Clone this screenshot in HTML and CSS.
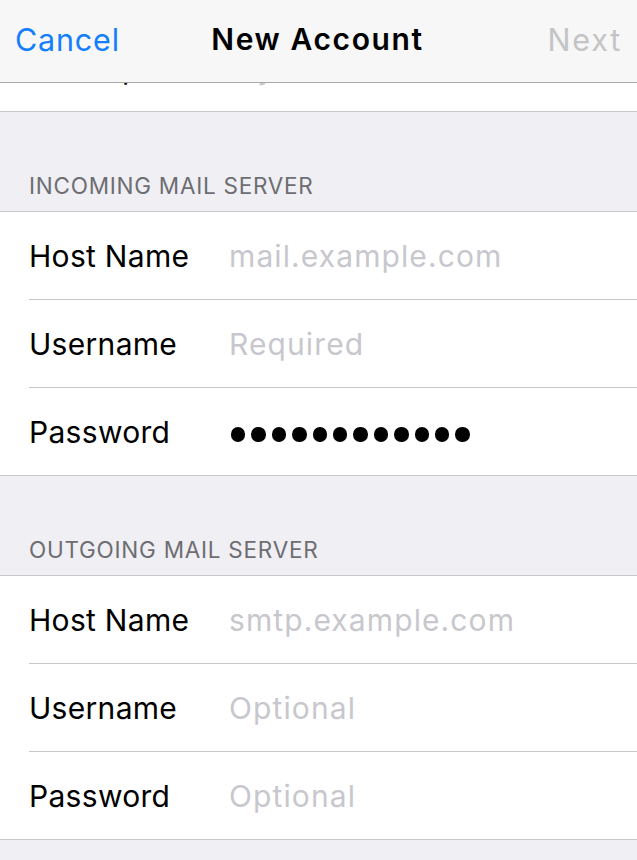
FILE: index.html
```html
<!DOCTYPE html>
<html>
<head>
<meta charset="utf-8">
<link rel="stylesheet" href="styles.css">
</head>
<body>
<div class="screen">
  <header class="nav">
    <span class="nav-btn cancel">Cancel</span>
    <span class="nav-title">New Account</span>
    <span class="nav-btn next">Next</span>
  </header>
  <main class="content">
    <section class="group group-top">
      <div class="clip">
        <div class="row last"><span class="label">Description</span><span class="value placeholder">My Account</span></div>
      </div>
    </section>
    <div class="section-header">INCOMING MAIL SERVER</div>
    <section class="group">
      <div class="row"><span class="label">Host Name</span><span class="value placeholder">mail.example.com</span></div>
      <div class="row"><span class="label">Username</span><span class="value placeholder">Required</span></div>
      <div class="row last"><span class="label">Password</span>
        <span class="value dots"><i></i><i></i><i></i><i></i><i></i><i></i><i></i><i></i><i></i><i></i><i></i><i></i></span>
      </div>
    </section>
    <div class="section-header">OUTGOING MAIL SERVER</div>
    <section class="group">
      <div class="row"><span class="label">Host Name</span><span class="value placeholder">smtp.example.com</span></div>
      <div class="row"><span class="label">Username</span><span class="value placeholder">Optional</span></div>
      <div class="row last"><span class="label">Password</span><span class="value placeholder">Optional</span></div>
    </section>
  </main>
</div>
</body>
</html>
```
FILE: styles.css
```css
html, body {
  margin: 0;
  padding: 0;
}
body {
  font-family: "Inter", "Liberation Sans", sans-serif;
  background: #efeff4;
}
.screen {
  width: 637px;
  height: 860px;
  overflow: hidden;
  background: #efeff4;
}
.nav {
  height: 82px;
  box-sizing: content-box;
  border-bottom: 1px solid #a9a9ac;
  background: #f7f7f7;
  display: grid;
  grid-template-columns: 1fr auto 1fr;
  align-items: center;
  padding: 0 16px 0 15px;
}
.nav-btn {
  font-size: 30.5px;
  font-weight: 400;
  letter-spacing: 1.2px;
  margin-top: -4px;
}
.cancel { color: #157efb; justify-self: start; letter-spacing: 0.8px; }
.next { color: #c4c4c6; justify-self: end; letter-spacing: 1.8px; margin-right: -1px; }
.nav-title {
  font-size: 30px;
  font-weight: 600;
  letter-spacing: 1.6px;
  color: #000;
  margin-top: -4px;
  margin-left: -1px;
}
.group {
  background: #fff;
  border-top: 1px solid #c8c7cc;
  border-bottom: 1px solid #c8c7cc;
}
.group-top {
  border-top: none;
}
.clip {
  height: 28px;
  overflow: hidden;
}
.clip .row {
  margin-top: -59px;
}
.row {
  height: 87px;
  display: flex;
  align-items: center;
  padding-left: 29px;
}
.row > .label, .row > .value {
  font-size: 30px;
}
.label {
  width: 200px;
  flex: none;
  color: #000;
  letter-spacing: 0.3px;
}
.value {
  letter-spacing: 1.1px;
}
.row:not(.last) {
  background-image: linear-gradient(#c8c7cc, #c8c7cc);
  background-size: calc(100% - 29px) 1px;
  background-position: right bottom;
  background-repeat: no-repeat;
  height: 88px;
  box-sizing: border-box;
}
.placeholder {
  color: #c7c7cd;
}
.dots {
  display: flex;
  gap: 6px;
  margin-left: 2px;
  margin-top: 6px;
}
.dots i {
  width: 14.4px;
  height: 14.4px;
  border-radius: 50%;
  background: #000;
}
.section-header {
  height: 99px;
  box-sizing: border-box;
  display: flex;
  align-items: flex-end;
  padding: 0 0 14px 29px;
  font-size: 22.5px;
  letter-spacing: 0.75px;
  line-height: 22px;
  color: #6d6d72;
}
```
